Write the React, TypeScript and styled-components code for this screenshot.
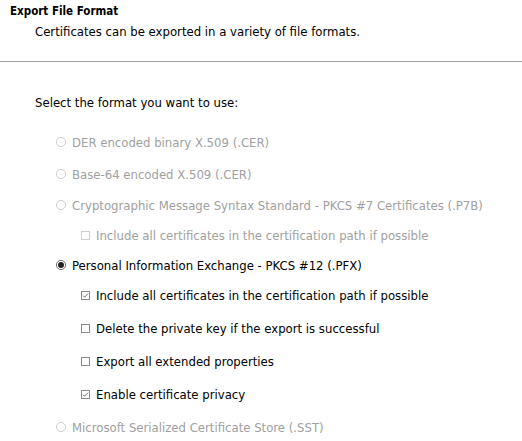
import React from "react";
import styled, { createGlobalStyle } from "styled-components";

const GlobalStyle = createGlobalStyle`
  html, body {
    margin: 0;
    padding: 0;
    background: #fff;
  }
  body {
    font-family: "DejaVu Sans Condensed", "DejaVu Sans", sans-serif;
    font-size: 13px;
    color: #000;
  }
`;

type Option = {
  id: string;
  kind: "radio" | "check";
  label: string;
  checked?: boolean;
  disabled?: boolean;
  h: number;
};

const options: Option[] = [
  { id: "der", kind: "radio", label: "DER encoded binary X.509 (.CER)", disabled: true, h: 32 },
  { id: "b64", kind: "radio", label: "Base-64 encoded X.509 (.CER)", disabled: true, h: 32 },
  { id: "p7b", kind: "radio", label: "Cryptographic Message Syntax Standard - PKCS #7 Certificates (.P7B)", disabled: true, h: 30 },
  { id: "p7b-all", kind: "check", label: "Include all certificates in the certification path if possible", disabled: true, h: 31 },
  { id: "pfx", kind: "radio", label: "Personal Information Exchange - PKCS #12 (.PFX)", checked: true, h: 28 },
  { id: "pfx-all", kind: "check", label: "Include all certificates in the certification path if possible", checked: true, h: 33 },
  { id: "pfx-del", kind: "check", label: "Delete the private key if the export is successful", h: 32 },
  { id: "pfx-ext", kind: "check", label: "Export all extended properties", h: 34 },
  { id: "pfx-priv", kind: "check", label: "Enable certificate privacy", checked: true, h: 33 },
  { id: "sst", kind: "radio", label: "Microsoft Serialized Certificate Store (.SST)", disabled: true, h: 32 },
];

const Page = styled.div`
  width: 522px;
  height: 441px;
  overflow: hidden;
  background: #fff;
`;

const Header = styled.div`
  padding: 3px 0 0 10px;
  height: 59px;
  box-sizing: border-box;
`;

const Title = styled.div`
  font-weight: bold;
  font-size: 11.5px;
  line-height: 16px;
`;

const Subtitle = styled.div`
  padding-left: 25px;
  margin-top: 4px;
  font-size: 13px;
  line-height: 17px;
`;

const Separator = styled.div`
  height: 1px;
  background: #a0a0a0;
  border-bottom: 1px solid #fff;
  margin-top: 2px;
`;

const Body = styled.div`
  padding: 31px 0 0 35px;
  font-size: 13px;
`;

const Prompt = styled.div`
  line-height: 17px;
  margin-bottom: 15px;
`;

const List = styled.div`
  display: flex;
  flex-direction: column;
  padding-left: 20px;
`;

const Row = styled.label<{ $h: number; $sub: boolean; $disabled?: boolean }>`
  display: flex;
  align-items: center;
  gap: 5px;
  height: ${(p) => p.$h}px;
  padding-left: ${(p) => (p.$sub ? 25 : 0)}px;
  color: ${(p) => (p.$disabled ? "#a0a0a0" : "#000")};
  white-space: nowrap;
`;

const Mark = styled.svg`
  flex: none;
  display: block;
`;

const Radio = ({ checked, disabled }: { checked?: boolean; disabled?: boolean }) => (
  <Mark width="12" height="12" viewBox="0 0 12 12">
    <circle cx="6" cy="6" r="4.6" fill="#fff" stroke={disabled ? "#cfcfcf" : "#6f6f6f"} strokeWidth="1" />
    {checked && <circle cx="6" cy="6" r="3" fill="#222" />}
  </Mark>
);

const Check = ({ checked, disabled }: { checked?: boolean; disabled?: boolean }) => (
  <Mark width="11" height="11" viewBox="0 0 11 11">
    <rect x="1.5" y="1.5" width="8" height="8" fill="#fff" stroke={disabled ? "#cfcfcf" : "#8a8a8a"} strokeWidth="1" />
    {checked && (
      <path d="M3 5.6 L4.6 7.2 L8 3.6" fill="none" stroke="#6a6a6a" strokeWidth="1" />
    )}
  </Mark>
);

export default function App() {
  return (
    <Page>
      <GlobalStyle />
      <Header>
        <Title>Export File Format</Title>
        <Subtitle>Certificates can be exported in a variety of file formats.</Subtitle>
      </Header>
      <Separator />
      <Body>
        <Prompt>Select the format you want to use:</Prompt>
        <List>
          {options.map((o) => (
            <Row key={o.id} $h={o.h} $sub={o.kind === "check"} $disabled={o.disabled}>
              {o.kind === "radio" ? (
                <Radio checked={o.checked} disabled={o.disabled} />
              ) : (
                <Check checked={o.checked} disabled={o.disabled} />
              )}
              {o.label}
            </Row>
          ))}
        </List>
      </Body>
    </Page>
  );
}
